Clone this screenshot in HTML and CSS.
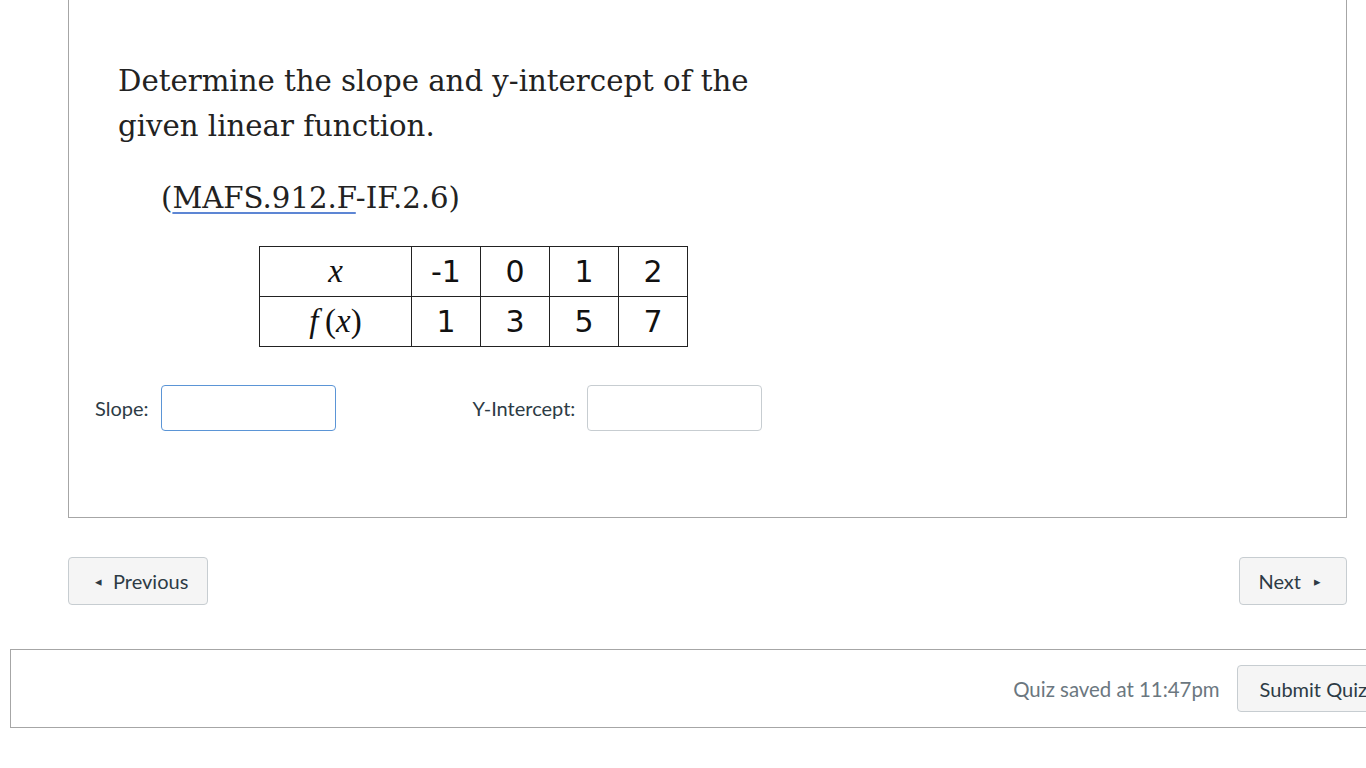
FILE: index.html
```html
<!DOCTYPE html>
<html>
<head>
<meta charset="utf-8">
<link rel="stylesheet" href="styles.css">
</head>
<body>
<div class="page">
  <div class="question">
    <p class="prompt">Determine the slope and y-intercept of the given linear function.</p>
    <p class="standard">(<span class="spell">MAFS.912.F</span>-IF.2.6)</p>
    <table class="values">
      <tr>
        <td class="var"><i>x</i></td>
        <td>-1</td><td>0</td><td>1</td><td>2</td>
      </tr>
      <tr>
        <td class="var"><i>f</i>&thinsp;(<i>x</i>)</td>
        <td>1</td><td>3</td><td>5</td><td>7</td>
      </tr>
    </table>
    <div class="answers">
      <label class="field">Slope: <span class="input focused"></span></label>
      <label class="field second">Y-Intercept: <span class="input"></span></label>
    </div>
  </div>
  <div class="nav">
    <button class="btn prev"><span class="tri">◂</span>Previous</button>
    <button class="btn next">Next<span class="tri">▸</span></button>
  </div>
</div>
<div class="footer">
  <span class="saved">Quiz saved at 11:47pm</span>
  <button class="btn submit">Submit Quiz</button>
</div>
</body>
</html>
```

FILE: styles.css
```css
html, body {
  margin: 0;
  padding: 0;
  background: #fff;
  overflow: hidden;
  width: 1366px;
  height: 768px;
}
body {
  font-family: Lato, "Liberation Sans", sans-serif;
  color: #2d3b45;
}
.page {
  padding-left: 68px;
  width: 1279px;
}
.question {
  border: 1px solid #a6a6a6;
  border-top: none;
  padding: 59px 0 86px 49px;
  box-sizing: border-box;
  width: 1279px;
}
.prompt {
  margin: 0;
  width: 670px;
  font-family: "DejaVu Serif", serif;
  font-size: 29.2px;
  line-height: 45px;
  color: #222;
}
.standard {
  margin: 27px 0 0 43px;
  font-family: "DejaVu Serif", serif;
  font-size: 29.2px;
  line-height: 45px;
  color: #222;
}
.spell {
  text-decoration: underline;
  text-decoration-color: #5d86d4;
  text-decoration-thickness: 2px;
  text-underline-offset: 4px;
}
.values {
  margin: 25px 0 0 141px;
  border-collapse: collapse;
  font-family: "DejaVu Sans", sans-serif;
  font-size: 30px;
  color: #111;
}
.values td {
  border: 1.5px solid #222;
  height: 50px;
  padding: 0;
  width: 69px;
  text-align: center;
  box-sizing: border-box;
}
.values td.var {
  width: 152px;
  font-family: "Liberation Serif", serif;
  font-size: 33px;
}
.answers {
  display: flex;
  align-items: center;
  margin: 38px 0 0 -23px;
  font-size: 20px;
}
.field {
  display: flex;
  align-items: center;
  gap: 12px;
}
.field.second {
  margin-left: 137px;
}
.input {
  display: inline-block;
  width: 175px;
  height: 46px;
  box-sizing: border-box;
  border: 1px solid #c7cdd1;
  border-radius: 4px;
  background: #fff;
}
.input.focused {
  border-color: #5b95d6;
}
.nav {
  display: flex;
  justify-content: space-between;
  margin-top: 39px;
}
.btn {
  font-family: Lato, "Liberation Sans", sans-serif;
  font-size: 20px;
  color: #2d3b45;
  background: #f5f5f5;
  border: 1px solid #c7cdd1;
  border-radius: 4px;
  height: 48px;
  box-sizing: border-box;
  display: inline-flex;
  align-items: center;
  padding: 0 19px;
  cursor: pointer;
}
.tri {
  font-size: 13px;
  color: #2d3b45;
}
.prev { padding-left: 26px; }
.next { padding-left: 18px; padding-right: 25px; }
.prev .tri { margin-right: 11px; }
.next .tri { margin-left: 13px; }
.footer {
  margin: 44px 0 0 10px;
  width: 1410px;
  height: 79px;
  box-sizing: border-box;
  border: 1px solid #a6a6a6;
  display: flex;
  align-items: center;
  justify-content: flex-end;
  padding-right: 29px;
  gap: 17px;
}
.saved {
  color: #6b7780;
  font-size: 20.4px;
}
.submit {
  height: 47px;
  padding: 0 22px;
}
```
